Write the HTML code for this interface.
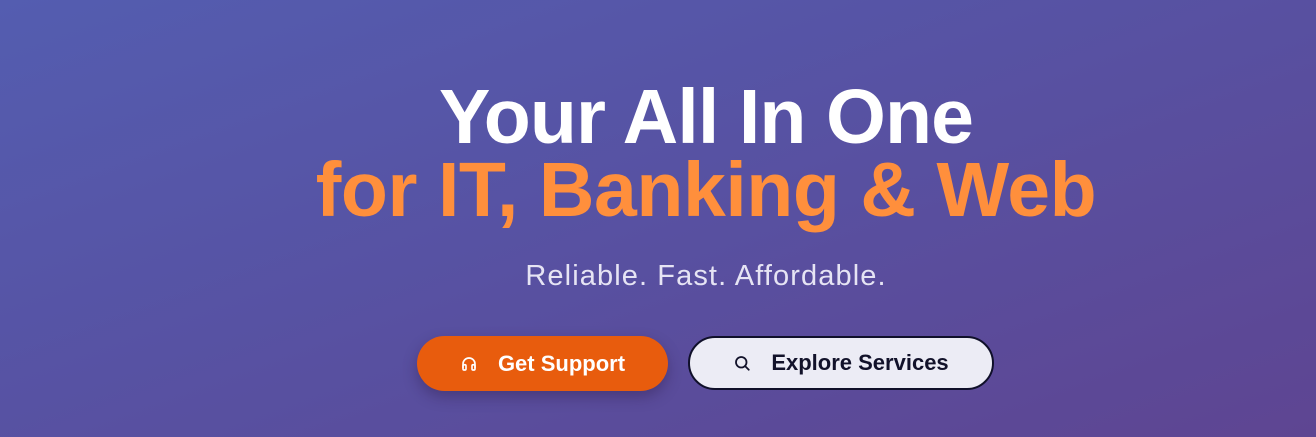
<!DOCTYPE html>
<html><head><meta charset="utf-8"><style>
html,body{margin:0;padding:0}
body{width:1316px;height:437px;overflow:hidden;position:relative;font-family:"Liberation Sans",sans-serif;
background:linear-gradient(160deg,#545db0 0%,#5752a3 45%,#5e4592 100%);}
.t{position:absolute;left:48px;width:1316px;text-align:center;white-space:nowrap;font-weight:bold}
.l1{top:72px;font-size:77px;line-height:90px;color:#fff;letter-spacing:-0.9px}
.l2{top:145px;font-size:77px;line-height:90px;color:#ff8f3c;letter-spacing:-0.45px}
.sub{position:absolute;left:48px;width:1316px;top:258px;text-align:center;font-size:29px;line-height:36px;color:#e6e4f4;letter-spacing:1.1px}
.b{position:absolute;top:336px;height:55px;border-radius:28px;box-sizing:border-box;display:flex;align-items:center;justify-content:center;font-weight:bold;font-size:22px}
.b1{left:417px;width:251px;background:#e85c0d;color:#fff;box-shadow:0 6px 14px rgba(40,20,60,.35)}
.b2{left:688px;width:306px;height:54px;background:#ececf5;color:#12122a;border:2px solid #10102a}
svg{margin-right:20px}
</style></head><body>
<div class="t l1">Your All In One</div>
<div class="t l2">for IT, Banking &amp; Web</div>
<div class="sub">Reliable. Fast. Affordable.</div>
<div class="b b1"><svg width="18" height="18" viewBox="0 0 24 24" fill="none" stroke="#fff" stroke-width="2.2" stroke-linecap="round"><path d="M4 17v-5a8 8 0 0 1 16 0v5"/><rect x="4" y="13" width="4" height="7" rx="1.5"/><rect x="16" y="13" width="4" height="7" rx="1.5"/></svg>Get Support</div>
<div class="b b2"><svg width="18" height="18" viewBox="0 0 24 24" fill="none" stroke="#12122a" stroke-width="2.4" stroke-linecap="round"><circle cx="11" cy="11" r="7"/><path d="M16 16l5 5"/></svg>Explore Services</div>
</body></html>
